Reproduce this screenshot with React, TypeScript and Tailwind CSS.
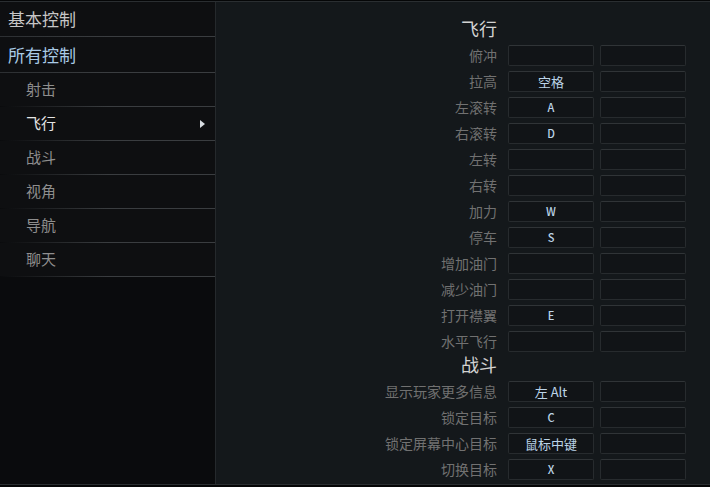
import React from "react";

type Bind = { label: string; key1?: string; key2?: string };

const flight: Bind[] = [
  { label: "俯冲" },
  { label: "拉高", key1: "空格" },
  { label: "左滚转", key1: "A" },
  { label: "右滚转", key1: "D" },
  { label: "左转" },
  { label: "右转" },
  { label: "加力", key1: "W" },
  { label: "停车", key1: "S" },
  { label: "增加油门" },
  { label: "减少油门" },
  { label: "打开襟翼", key1: "E" },
  { label: "水平飞行" },
];

const combat: Bind[] = [
  { label: "显示玩家更多信息", key1: "左 Alt" },
  { label: "锁定目标", key1: "C" },
  { label: "锁定屏幕中心目标", key1: "鼠标中键" },
  { label: "切换目标", key1: "X" },
];

const subItems = ["射击", "飞行", "战斗", "视角", "导航", "聊天"];

function KeyBox({ value }: { value?: string }) {
  const latin = value ? /^[A-Za-z ]+$/.test(value) : false;
  return (
    <div className="flex h-[21px] w-[86px] items-center justify-center rounded-[2px] border border-[#272b2e] border-t-[#303437] bg-[#111417] text-[#bcd4e8]">
      {value ? (
        <span className={latin ? "text-[11px] font-medium" : "text-[13px]"}>{value}</span>
      ) : null}
    </div>
  );
}

function Section({ title, rows }: { title: string; rows: Bind[] }) {
  return (
    <div className="flex flex-col">
      <div className="flex h-[24px] items-center">
        <div className="w-[281px] text-right text-[18px] leading-[24px] text-[#d2d2d2]">{title}</div>
      </div>
      {rows.map((r) => (
        <div key={r.label} className="mt-[5px] flex h-[21px] items-center">
          <div className="w-[281px] text-right text-[14px] leading-[21px] text-[#717171]">{r.label}</div>
          <div className="ml-[11px]">
            <KeyBox value={r.key1} />
          </div>
          <div className="ml-[6px]">
            <KeyBox value={r.key2} />
          </div>
        </div>
      ))}
    </div>
  );
}

function RowLine({ inset }: { inset?: boolean }) {
  return (
    <div
      className={
        inset
          ? "h-px w-full bg-gradient-to-r from-transparent via-[#3a3d40] to-[#3a3d40]"
          : "h-px w-full bg-gradient-to-r from-[#2c2f32] via-[#3a3d40] to-[#3a3d40]"
      }
    />
  );
}

export default function App() {
  return (
    <div
      className="h-[487px] w-[710px] overflow-hidden bg-[#050607] pt-px"
      style={{ fontFamily: '"Noto Sans CJK SC", "Noto Sans", sans-serif' }}
    >
      <div className="flex h-[484px] border-y border-[#2a2e31]">
        <aside className="flex w-[216px] shrink-0 flex-col border-r border-[#25292c] bg-[#0a0b0d]">
          <div className="flex h-[34px] items-center bg-[#0e0f11] pl-[8px] text-[17px] text-[#c6c6c6]">基本控制</div>
          <RowLine />
          <div className="flex h-[35px] items-center bg-[#0e0f11] pl-[8px] text-[17px] text-[#a9cbe6]">所有控制</div>
          <RowLine />
          {subItems.map((s) => (
            <React.Fragment key={s}>
              <div
                className={
                  s === "飞行"
                    ? "flex h-[33px] items-center justify-between bg-[#0e0f11] pl-[26px] pr-[10px] text-[15px] text-[#e4e4e4]"
                    : "flex h-[33px] items-center bg-[#0e0f11] pl-[26px] text-[15px] text-[#8e8e8e]"
                }
              >
                <span>{s}</span>
                {s === "飞行" ? (
                  <svg width="5" height="8" viewBox="0 0 5 8">
                    <path d="M0 0 L5 4 L0 8 Z" fill="#d8dde2" />
                  </svg>
                ) : null}
              </div>
              <RowLine inset />
            </React.Fragment>
          ))}
        </aside>
        <main className="flex-1 bg-[#14181b] pt-[14px]">
          <Section title="飞行" rows={flight} />
          <Section title="战斗" rows={combat} />
        </main>
      </div>
    </div>
  );
}
